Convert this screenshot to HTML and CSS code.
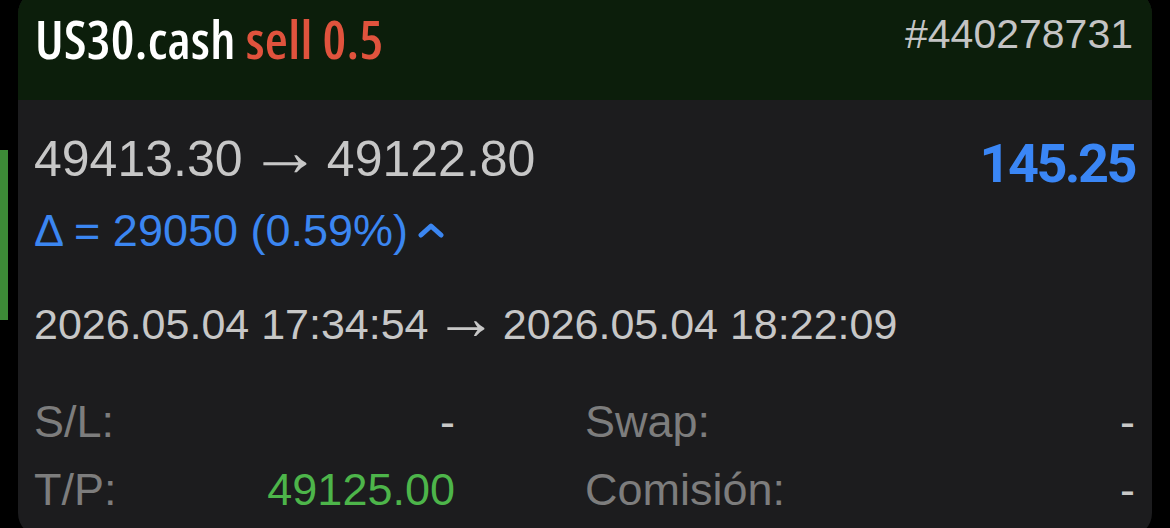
FILE: index.html
```html
<!DOCTYPE html>
<html lang="es">
<head>
    <meta charset="UTF-8">
    <meta name="viewport" content="width=device-width, initial-scale=1.0">
    <title>Operación US30.cash</title>
    <link rel="stylesheet" href="styles.css">
</head>
<body>
    <div class="wrap">
        <div class="marker"></div>

        <div class="card">
            <div class="card-head">
                <div class="title">US30.cash <span class="side">sell 0.5</span></div>
                <div class="ticket">#440278731</div>
            </div>

            <div class="card-body">
                <div class="price-row">
                    <div class="span-row prices"><span>49413.30</span> <span class="arrow">→</span> <span>49122.80</span></div>
                    <div class="profit">145.25</div>
                </div>
                <div class="delta">
                    Δ = 29050 (0.59%)
                    <svg class="chevron" width="26" height="17" viewBox="0 0 26 17">
                        <path d="M3 14 L13 5 L23 14" fill="none" stroke="#3b86f1" stroke-width="5" stroke-linecap="round" stroke-linejoin="round"/>
                    </svg>
                </div>

                <div class="span-row dates"><span>2026.05.04 17:34:54</span> <span class="arrow">→</span> <span>2026.05.04 18:22:09</span></div>

                <div class="stats">
                    <div class="stat"><span class="label">S/L:</span><span class="value">-</span></div>
                    <div class="stat"><span class="label">Swap:</span><span class="value">-</span></div>
                    <div class="stat"><span class="label">T/P:</span><span class="value tp">49125.00</span></div>
                    <div class="stat"><span class="label">Comisión:</span><span class="value">-</span></div>
                </div>
            </div>
        </div>
    </div>
</body>
</html>
```

FILE: styles.css
```css
html, body {
    margin: 0;
    background-color: #000;
}
body {
    font-family: "Liberation Sans", Arial, sans-serif;
    overflow: hidden;
}
.wrap {
    display: flex;
    align-items: flex-start;
    gap: 10px;
    margin-top: -10px;
}
.marker {
    width: 8px;
    height: 170px;
    margin-top: 160px;
    background-color: #3d8b37;
}
.card {
    width: 1134px;
    border-radius: 24px;
    overflow: hidden;
    background-color: #1c1c1e;
}
.card-head {
    height: 110px;
    box-sizing: border-box;
    padding: 20px 19px 0 17px;
    display: flex;
    justify-content: space-between;
    align-items: flex-start;
    background-color: #0c1e0b;
}
.title {
    margin-top: 1px;
    font-family: "Open Sans", sans-serif;
    font-weight: 600;
    font-stretch: 75%;
    font-size: 53px;
    line-height: 56px;
    letter-spacing: 0.3px;
    color: #fff;
}
.side {
    color: #e0533d;
}
.ticket {
    font-size: 41px;
    line-height: 48px;
    color: #c4c4c4;
}
.card-body {
    padding: 31px 17px 21px 16px;
}
.price-row {
    display: flex;
    justify-content: space-between;
    align-items: flex-start;
}
/* only the gaps around the arrow get tightened */
.span-row > span {
    word-spacing: normal;
}
.prices {
    font-size: 50px;
    line-height: 56px;
    word-spacing: -8px;
    color: #c7c7c7;
}
.arrow {
    font-size: 1.45em;
    line-height: 0;
}
.profit {
    margin-top: 3px;
    font-family: Roboto, sans-serif;
    font-weight: bold;
    font-size: 54px;
    line-height: 60px;
    letter-spacing: -2.5px;
    color: #3a86f5;
}
.delta {
    margin-top: 11px;
    font-size: 45px;
    line-height: 52px;
    color: #3b86f1;
    display: flex;
    align-items: center;
}
.chevron {
    margin-left: 10px;
    margin-top: -4px;
}
.dates {
    margin-top: 42px;
    font-size: 43px;
    line-height: 50px;
    word-spacing: -6px;
    color: #c7c7c7;
}
.stats {
    margin-top: 47px;
    display: grid;
    grid-template-columns: 421px 1fr;
    column-gap: 130px;
    row-gap: 16px;
}
.stat {
    display: flex;
    justify-content: space-between;
    font-size: 45px;
    line-height: 52px;
}
.label {
    color: #7d7d7d;
}
.value {
    color: #c8c8c8;
}
.value.tp {
    color: #4db54a;
}
```
